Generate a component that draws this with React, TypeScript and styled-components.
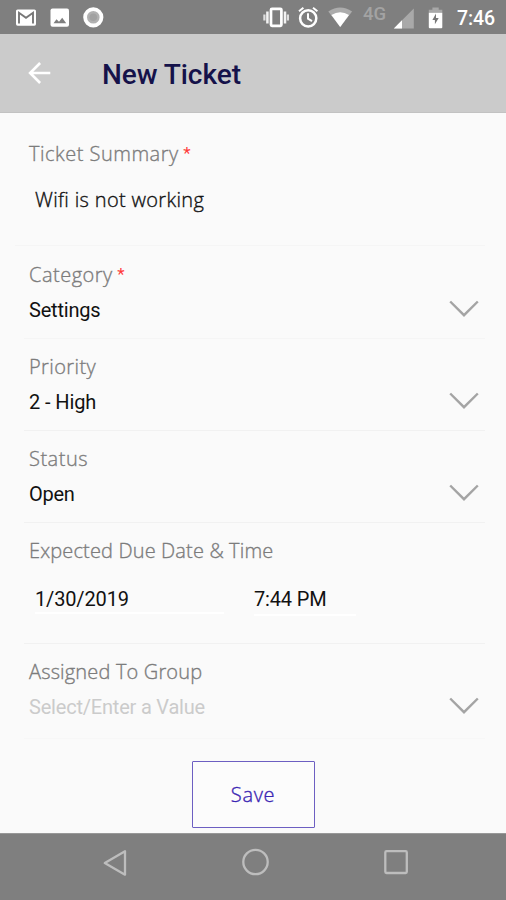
import React from 'react';
import styled, { createGlobalStyle } from 'styled-components';

const GlobalStyle = createGlobalStyle`
  * { box-sizing: border-box; }
  html, body { margin: 0; background: #fafafa; }
  body { overflow: hidden; }
`;

const Screen = styled.div`
  width: 506px;
  height: 900px;
  display: flex;
  flex-direction: column;
  overflow: hidden;
  background: #fafafa;
  font-family: Roboto, 'Open Sans', sans-serif;
`;

const StatusBar = styled.div`
  flex: 0 0 34px;
  background: #7f7f7f;
  svg { display: block; width: 100%; height: 34px; }
`;

const StatusText = styled.text<{ $dim?: boolean }>`
  font-family: Roboto, sans-serif;
  font-size: ${p => (p.$dim ? 18.5 : 19.5)}px;
  font-weight: 500;
  fill: ${p => (p.$dim ? '#a3a3a3' : '#fff')};
`;

const Header = styled.header`
  flex: 0 0 79px;
  display: flex;
  align-items: center;
  padding-left: 28px;
  background: #cbcbcb;
  border-bottom: 1px solid #c2c2c2;
`;

const BackButton = styled.button`
  width: 24px;
  height: 24px;
  padding: 0;
  border: 0;
  background: none;
  margin-right: 50px;
  svg { display: block; }
`;

const Title = styled.h1`
  margin: 3px 0 0;
  font-size: 28px;
  line-height: 34px;
  font-weight: 500;
  letter-spacing: -0.05px;
  color: #15124a;
`;

const Form = styled.main`
  flex: 1;
  display: flex;
  flex-direction: column;
`;

const Field = styled.section<{ $height: number; $top?: number; $line?: string; $outdent?: number }>`
  flex: 0 0 ${p => p.$height}px;
  margin: 0 21px 0 ${p => 24 - (p.$outdent ?? 0)}px;
  padding: ${p => p.$top ?? 16}px 0 0 ${p => 5 + (p.$outdent ?? 0)}px;
  border-bottom: 1px solid ${p => p.$line ?? '#f1f1f1'};
`;

const Label = styled.div<{ $spacing: number }>`
  display: flex;
  height: 24px;
  line-height: 24px;
  font-family: 'Open Sans', sans-serif;
  font-weight: 300;
  font-size: 20px;
  letter-spacing: ${p => p.$spacing}px;
  color: #7c7c7c;
  -webkit-text-stroke: 0.35px #7c7c7c;
  white-space: nowrap;
`;

const Required = styled.span`
  margin: -1px 0 0 4.5px;
  font-family: Roboto, sans-serif;
  font-weight: 400;
  font-size: 17px;
  color: #ff3b3b;
  -webkit-text-stroke: 0;
`;

const SelectRow = styled.div`
  display: flex;
  justify-content: space-between;
  padding: 11px 6px 0 0;
  height: 35px;
  svg { display: block; margin-top: 2px; overflow: visible; }
`;

const Value = styled.span<{ $spacing?: number; $placeholder?: boolean }>`
  font-size: 20px;
  line-height: 24px;
  font-weight: 400;
  letter-spacing: ${p => p.$spacing ?? 0}px;
  color: ${p => (p.$placeholder ? '#cbcbcb' : '#111')};
  white-space: nowrap;
`;

const SummaryText = styled.div`
  margin-top: 22px;
  padding-left: 6px;
  font-family: 'Open Sans', sans-serif;
  font-weight: 300;
  font-size: 20px;
  line-height: 24px;
  letter-spacing: 0.33px;
  color: #111;
  -webkit-text-stroke: 0.35px #111;
`;

const DateTimeRow = styled.div`
  display: grid;
  grid-template-columns: 219px 110px;
  padding: 24px 0 0 6px;
`;

const DateTimeBox = styled.div<{ $width: number; $gap: number }>`
  width: ${p => p.$width}px;
  height: ${p => 24 + p.$gap}px;
  border-bottom: 2px solid #fff;
`;

const Actions = styled.div`
  display: flex;
  justify-content: center;
  padding-top: 22px;
`;

const SaveButton = styled.button`
  width: 123px;
  height: 67px;
  padding: 0;
  border: 1px solid #6d5fc2;
  border-radius: 1px;
  background: #fcfcfc;
  font-family: 'Open Sans', sans-serif;
  font-weight: 300;
  font-size: 20px;
  letter-spacing: 0.65px;
  color: #3a25b3;
  -webkit-text-stroke: 0.35px #3a25b3;
`;

const NavBar = styled.nav`
  flex: 0 0 67px;
  background: #7f7f7f;
  border-top: 1px solid #989898;
  svg { display: block; width: 100%; height: 66px; }
`;

const Chevron = () => (
  <svg width="30" height="18" viewBox="0 0 30 18" fill="none" stroke="#a4a4a4" strokeWidth="2.4">
    <path d="M1.2 1.5 15 15.2 28.8 1.5" />
  </svg>
);

type SelectProps = {
  label: string;
  spacing: number;
  value: string;
  valueSpacing?: number;
  required?: boolean;
  placeholder?: boolean;
  height?: number;
  top?: number;
  line?: string;
};

const SelectField = ({ label, spacing, value, valueSpacing, required, placeholder, height = 92, top, line }: SelectProps) => (
  <Field $height={height} $top={top} $line={line}>
    <Label $spacing={spacing}>{label}{required && <Required>*</Required>}</Label>
    <SelectRow>
      <Value $spacing={valueSpacing} $placeholder={placeholder}>{value}</Value>
      <Chevron />
    </SelectRow>
  </Field>
);

export default function App() {
  return (
    <>
      <GlobalStyle />
      <Screen>
        <StatusBar>
          <svg viewBox="0 0 506 34">
            <rect x="16" y="9.5" width="20" height="16.2" rx="1.6" fill="#fff" />
            <path d="M19 23.5V12.8L26 17.8l7-5v10.7" fill="none" stroke="#777" strokeWidth="1.9" />
            <rect x="50.5" y="8.5" width="18.5" height="18.3" rx="2" fill="#fff" />
            <path d="m53.5 23.3 3-4 2.5 2.5 3.2-4 4 5.5Z" fill="#7f7f7f" />
            <circle cx="93.3" cy="17.3" r="8.2" fill="#b1b1b1" stroke="#fff" strokeWidth="3.8" />
            <circle cx="93.3" cy="17.3" r="3.8" fill="#a2a2a2" />
            <rect x="271" y="8.8" width="10.4" height="17" rx="1" fill="none" stroke="#fff" strokeWidth="2.7" />
            <path d="M267.4 11.5v12M285 11.5v12" stroke="#f2f2f2" strokeWidth="2.5" />
            <path d="M264.4 14.5v6M287.9 14.5v6" stroke="#dedede" strokeWidth="2.2" />
            <circle cx="308.2" cy="18.3" r="8.1" fill="none" stroke="#fff" strokeWidth="2.5" />
            <path d="M308 13.2v5.5l4 2.4M299 11.3l4.4-3.5M317.4 11.3 313 7.8" fill="none" stroke="#fff" strokeWidth="2" />
            <path d="M328.3 11.6Q340.2 3.2 352.1 11.6L340.2 27Z" fill="#acacac" />
            <path d="M331.4 15.1Q340.2 9.4 349 15.1L340.2 27Z" fill="#fff" />
            <StatusText x="363" y="19.5" $dim textLength="23">4G</StatusText>
            <path d="M413.8 8.5v20h-20Z" fill="#a9a9a9" />
            <path d="M402 20.3v8.2h-8.2Z" fill="#fff" />
            <path d="M428.8 12.7h13.5v-3h-3.6V7.5h-6.3v2.2h-3.6Z" fill="#a8a8a8" />
            <path d="M428.8 12.7h13.5v14.6a1 1 0 0 1-1 1h-11.5a1 1 0 0 1-1-1Z" fill="#fff" />
            <path d="m436 13.6-3.6 6.3h2.5v4.4l3.8-6.3h-2.7Z" fill="#777" />
            <StatusText x="457" y="25" textLength="38">7:46</StatusText>
          </svg>
        </StatusBar>
        <Header>
          <BackButton aria-label="Back">
            <svg width="24" height="24" viewBox="0 0 24 24" fill="none" stroke="#fff" strokeWidth="2.6">
              <path d="M22.3 12H2.2M12.1 2 2.1 12l10 10" />
            </svg>
          </BackButton>
          <Title>New Ticket</Title>
        </Header>
        <Form>
          <Field $height={133} $top={29} $line="#f5f5f5" $outdent={9}>
            <Label $spacing={0.5}>Ticket Summary<Required>*</Required></Label>
            <SummaryText>Wifi is not working</SummaryText>
          </Field>
          <SelectField label="Category" spacing={0.5} required value="Settings" valueSpacing={-0.2} height={93} top={17} line="#f5f5f5" />
          <SelectField label="Priority" spacing={0.4} value="2 - High" valueSpacing={-0.1} />
          <SelectField label="Status" spacing={0.5} value="Open" valueSpacing={-0.25} />
          <Field $height={121}>
            <Label $spacing={0.14}>Expected Due Date &amp; Time</Label>
            <DateTimeRow>
              <DateTimeBox $width={189} $gap={3}><Value $spacing={-0.15}>1/30/2019</Value></DateTimeBox>
              <DateTimeBox $width={102} $gap={5}><Value $spacing={-0.15}>7:44 PM</Value></DateTimeBox>
            </DateTimeRow>
          </Field>
          <SelectField label="Assigned To Group" spacing={0.16} value="Select/Enter a Value" valueSpacing={-0.2} placeholder height={95} line="#f7f7f7" />
          <Actions><SaveButton>Save</SaveButton></Actions>
        </Form>
        <NavBar>
          <svg viewBox="0 0 506 66" fill="none" stroke="#bdbdbd" strokeWidth="2.3">
            <path d="M125 17.3v23.4L104.8 29Z" strokeLinejoin="round" />
            <circle cx="255.5" cy="28" r="12.2" />
            <rect x="385.3" y="17.2" width="21.5" height="21.8" rx="1.2" />
          </svg>
        </NavBar>
      </Screen>
    </>
  );
}
